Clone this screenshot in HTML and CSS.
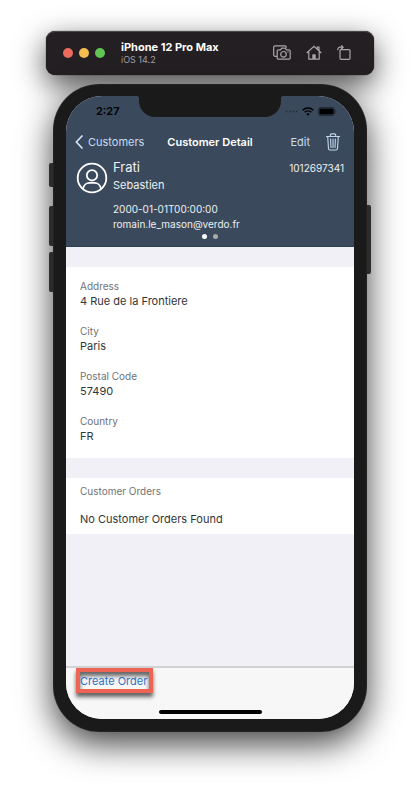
FILE: index.html
```html
<!DOCTYPE html>
<html lang="en">
<head>
<meta charset="utf-8">
<meta name="viewport" content="width=device-width, initial-scale=1">
<title>Customer Detail</title>
<link rel="stylesheet" href="styles.css">
</head>
<body>
<header class="titlebar">
  <div class="lights">
    <button class="light red" type="button" aria-label="Close"></button>
    <button class="light yellow" type="button" aria-label="Minimize"></button>
    <button class="light green" type="button" aria-label="Zoom"></button>
  </div>
  <div class="device">
    <div class="device-name">iPhone 12 Pro Max</div>
    <div class="device-os">iOS 14.2</div>
  </div>
  <div class="tools">
    <button type="button" aria-label="Screenshot">
      <svg width="18" height="16" viewBox="0 0 18 16"><path d="M4 11.300H2A1.300 1.300 0 0 1 .7 10V2.200A1.300 1.300 0 0 1 2 .900H12A1.300 1.300 0 0 1 13.300 2.200V2.800"/><path d="M5.500 4.800H7.500L8.800 3.200H12.200L13.500 4.800H15.800A1.300 1.300 0 0 1 17.200 6.100V12.800A1.300 1.300 0 0 1 15.800 14.200H5.500A1.300 1.300 0 0 1 4.200 12.800V6.100A1.300 1.300 0 0 1 5.500 4.800Z"/><circle cx="10.500" cy="9.300" r="2.800"/><circle class="dot" cx="15" cy="6.900" r=".7"/></svg>
    </button>
    <button type="button" aria-label="Home">
      <svg width="16" height="16" viewBox="0 0 16 16"><path d="M.7 8L8 1.200L15.300 8M2.800 6.800V14.200H13.200V6.800M11.300 3.900V2H13V5.600"/><path class="dot" d="M6.300 14V9.300H9.700V14Z"/></svg>
    </button>
    <button type="button" aria-label="Rotate">
      <svg width="14" height="16" viewBox="0 0 14 16"><rect x="3" y="4.600" width="10" height="9.700" rx="1"/><path d="M.8 5.200V4.500A2.300 2.300 0 0 1 3.100 2.200H6M4.200 .4L6.100 2.200L4.200 4"/></svg>
    </button>
  </div>
</header>

<div class="phone">
  <span class="side-key mute"></span>
  <span class="side-key volume-up"></span>
  <span class="side-key volume-down"></span>
  <span class="side-key power"></span>
  <div class="notch"></div>
  <main class="screen">
    <section class="hero">
      <div class="status">
        <time>2:27</time>
        <div class="status-icons">
          <svg width="13" height="3" viewBox="0 0 13 3" fill="#27313d"><circle cx="1.500" cy="1.500" r="1"/><circle cx="4.900" cy="1.500" r="1"/><circle cx="8.300" cy="1.500" r="1"/><circle cx="11.700" cy="1.500" r="1"/></svg>
          <svg width="12" height="9" viewBox="0 0 12 9" fill="none" stroke="#000" stroke-width="1.600"><path d="M.7 3.200A7.600 7.600 0 0 1 11.300 3.200"/><path d="M2.700 5.300A4.700 4.700 0 0 1 9.300 5.300"/><path d="M6 8.800L4.200 7A2.600 2.600 0 0 1 7.800 7Z" fill="#000" stroke="none"/></svg>
          <svg width="19" height="9" viewBox="0 0 19 9"><rect x=".5" y=".5" width="16" height="8" rx="2.200" fill="none" stroke="#202a36"/><rect x="1.400" y="1.400" width="14.200" height="6.200" rx="1.300"/><path d="M17.300 3A1.600 1.600 0 0 1 17.300 6Z" fill="#202a36"/></svg>
        </div>
      </div>
      <nav class="nav">
        <a class="back" href="#customers"><svg width="8" height="14" viewBox="0 0 8 14"><path d="M7 1L1.300 7L7 13"/></svg>Customers</a>
        <h1>Customer Detail</h1>
        <div class="actions">
          <button class="edit" type="button">Edit</button>
          <button class="trash" type="button" aria-label="Delete"><svg width="14" height="18" viewBox="0 0 14 18"><path d="M.4 3.500H13.600M4.300 3.300V2.100A1.200 1.200 0 0 1 5.500 .9H8.500A1.200 1.200 0 0 1 9.700 2.100V3.300M1.700 3.700L2.500 15.600A1.600 1.600 0 0 0 4 17H10A1.600 1.600 0 0 0 11.500 15.600L12.300 3.700M4.600 6L5 14.500M7 6V14.500M9.400 6L9 14.500"/></svg></button>
        </div>
      </nav>
      <div class="person">
        <svg class="avatar" width="32" height="32" viewBox="0 0 32 32"><circle cx="16" cy="16" r="14.300"/><circle cx="16" cy="13.300" r="5.200"/><path d="M7 27C7.600 22.800 10.700 20.800 13.500 20.800H18.500C21.300 20.800 24.400 22.800 25 27"/></svg>
        <div class="details">
          <div class="surname">Frati</div>
          <div class="forename">Sebastien</div>
          <div class="meta">
            <div>2000-01-01T00:00:00</div>
            <div>romain.le_mason@verdo.fr</div>
          </div>
        </div>
        <div class="number">1012697341</div>
      </div>
      <div class="pages"><span class="page current"></span><span class="page"></span></div>
    </section>

    <dl class="panel fields">
      <div><dt>Address</dt><dd>4 Rue de la Frontiere</dd></div>
      <div><dt>City</dt><dd>Paris</dd></div>
      <div><dt>Postal Code</dt><dd>57490</dd></div>
      <div><dt>Country</dt><dd>FR</dd></div>
    </dl>

    <section class="panel orders">
      <h2>Customer Orders</h2>
      <p>No Customer Orders Found</p>
    </section>

    <footer class="bottom">
      <button class="create" type="button">Create Order</button>
      <span class="home-indicator"></span>
    </footer>
  </main>
</div>
</body>
</html>
```
FILE: styles.css
```css
* { box-sizing: border-box; }

body {
  margin: 0;
  min-height: 100vh;
  padding: 31px 46px 62px;
  display: flex;
  flex-direction: column;
  gap: 9px;
  background: #fff;
  font-family: Inter, "Liberation Sans", sans-serif;
  font-size: 11px;
  line-height: 15px;
  color: #32363a;
  overflow-x: hidden;
}

button {
  border: 0;
  padding: 0;
  background: none;
  font: inherit;
  color: inherit;
}

svg { display: block; }
h1, h2, p, dl, dd { margin: 0; }

/* Simulator window bar */
.titlebar {
  display: flex;
  align-items: center;
  height: 44px;
  padding: 0 23px 0 17px;
  border-radius: 9px;
  background: #231f23;
  box-shadow: inset 0 1px 0 #4b484b, 0 0 1px #000, 0 10px 30px rgba(0, 0, 0, .7);
}
.lights { display: flex; gap: 6px; }
.light { width: 10px; height: 10px; border-radius: 50%; }
.red { background: #ed6a5e; }
.yellow { background: #f5bf4f; }
.green { background: #61c554; }
.device { margin-left: 16px; }
.device-name { font-weight: 700; line-height: 13px; color: #fff; }
.device-os { font-size: 9px; line-height: 11px; color: #a3a0a3; }
.tools { display: flex; gap: 15px; margin-left: auto; }
.tools svg { fill: none; stroke: #aaa6aa; stroke-width: 1.2; }
.tools .dot { fill: #aaa6aa; stroke: none; }

/* Phone body */
.phone {
  position: relative;
  flex: 1;
  display: flex;
  margin: 0 7px;
  padding: 12px 13px 13px;
  border-radius: 46px;
  background: #1a1a1a;
  box-shadow: inset 0 0 1px #777, 0 12px 34px rgba(0, 0, 0, .75);
}
.side-key {
  position: absolute;
  left: -4px;
  width: 4px;
  border-radius: 2px 0 0 2px;
  background: #2c2c2c;
}
.mute { top: 79px; height: 24px; }
.volume-up { top: 122px; height: 40px; }
.volume-down { top: 168px; height: 40px; }
.power { left: auto; right: -4px; top: 121px; height: 69px; border-radius: 0 2px 2px 0; }
.notch {
  position: absolute;
  top: 10px;
  left: 50%;
  width: 142px;
  height: 23px;
  margin-left: -71px;
  border-radius: 0 0 16px 16px;
  background: #1a1a1a;
}
.notch::before,
.notch::after {
  content: "";
  position: absolute;
  top: 2px;
  width: 3px;
  height: 3px;
}
.notch::before { left: -3px; background: radial-gradient(circle at 0 100%, transparent 3px, #1a1a1a 3px); }
.notch::after { right: -3px; background: radial-gradient(circle at 100% 100%, transparent 3px, #1a1a1a 3px); }
.screen {
  flex: 1;
  min-width: 0;
  display: flex;
  flex-direction: column;
  gap: 20px;
  border-radius: 36px;
  background: #f1f0f6;
  overflow: hidden;
}

/* Customer header */
.hero {
  padding-bottom: 5px;
  border-bottom: 1px solid #2f4052;
  background: #3a4a5c;
  color: #edf0f3;
}
.status {
  display: flex;
  align-items: center;
  justify-content: space-between;
  height: 30px;
  padding: 1px 17px 0 30px;
  font-weight: 600;
  color: #000;
}
.status-icons { display: flex; align-items: center; gap: 4px; }
.nav {
  display: grid;
  grid-template-columns: 1fr auto 1fr;
  align-items: center;
  height: 32px;
  padding: 0 9px;
  color: #c8dcf0;
}
.nav h1 { font-size: 11px; font-weight: 600; line-height: 15px; color: #fff; }
.back { display: flex; align-items: center; gap: 5px; color: inherit; text-decoration: none; }
.back svg { fill: none; stroke: #d4e6f8; stroke-width: 1.7; stroke-linecap: round; stroke-linejoin: round; }
.actions { display: flex; align-items: center; justify-content: flex-end; gap: 16px; padding-right: 5px; }
.trash svg { fill: none; stroke: #c0d6ec; stroke-width: 1.1; stroke-linecap: round; }
.person { display: flex; gap: 5px; padding: 0 10px; }
.avatar { margin-top: 4px; fill: none; stroke: #fff; stroke-width: 1.8; }
.details { flex: 1; }
.surname { font-size: 13px; line-height: 18px; }
.forename { line-height: 18px; }
.meta { margin-top: 8px; font-size: 10px; }
.number { font-size: 10px; line-height: 20px; }
.pages { display: flex; justify-content: center; gap: 6px; height: 9px; align-items: center; }
.page { width: 5px; height: 5px; border-radius: 50%; background: #a9a9a9; }
.current { background: #fff; }

/* Content panels */
.panel { padding: 12px 14px 14px; background: #fff; }
.fields { display: grid; gap: 15px; }
dt, h2 { font-size: 10px; font-weight: 400; line-height: 15px; color: #6f7276; }
.orders { padding: 6px 14px 7px; display: grid; gap: 13px; }

/* Bottom toolbar */
.bottom {
  margin-top: auto;
  display: flex;
  flex-direction: column;
  align-items: flex-start;
  justify-content: space-between;
  height: 53px;
  padding: 0 10px 5px;
  border-top: 2px solid #d2d2d5;
  background: #f7f7f7;
}
.create {
  height: 25px;
  padding: 2px 2px 0 0;
  border: 4px solid #ed6354;
  color: #2e6ec4;
  box-shadow: 0 4px 4px rgba(0, 0, 0, .6), inset 0 4px 4px rgba(0, 0, 0, .6);
}
.home-indicator {
  align-self: center;
  width: 103px;
  height: 4px;
  border-radius: 2px;
  background: #000;
}
```
